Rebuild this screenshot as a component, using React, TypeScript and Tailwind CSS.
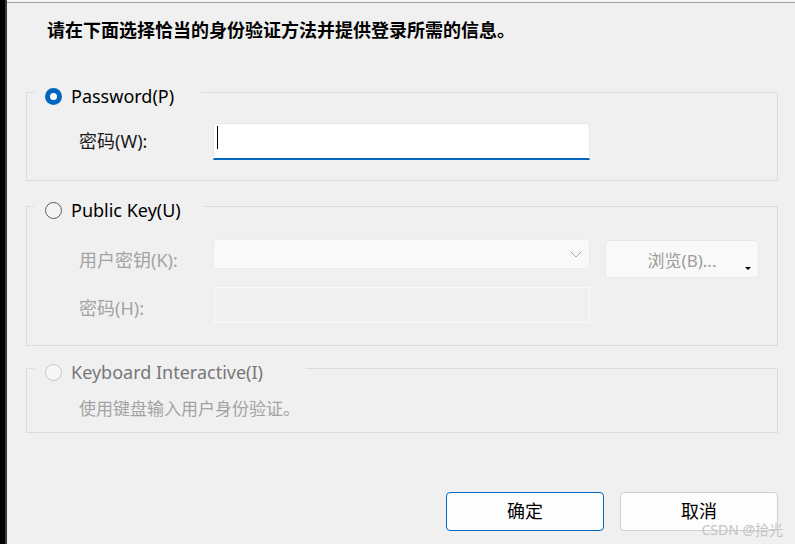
import React from 'react';

type RadioState = 'checked' | 'unchecked' | 'disabled';

const Radio: React.FC<{ state: RadioState }> = ({ state }) => {
  if (state === 'checked') {
    return (
      <span className="w-[17px] h-[17px] rounded-full bg-[#0067c0] flex items-center justify-center shrink-0">
        <span className="w-[7px] h-[7px] rounded-full bg-white" />
      </span>
    );
  }
  if (state === 'disabled') {
    return <span className="w-[17px] h-[17px] rounded-full border border-[#c4c4c4] bg-[#f7f7f7] shrink-0" />;
  }
  return <span className="w-[17px] h-[17px] rounded-full border border-[#5c5c5c] bg-[#f4f4f4] shrink-0" />;
};

// legend is 34px tall with the content pushed 4px below the border line
const GroupLegend: React.FC<{ width: string; state: RadioState; label: string }> = ({ width, state, label }) => (
  <legend className={`ml-[7px] pl-[11px] ${width}`}>
    <span className="flex items-center gap-[9px] h-[34px] pt-[8px]">
      <Radio state={state} />
      <span className={`text-[18px] leading-[26px] ${state === 'disabled' ? 'text-[#777777]' : 'text-black'}`}>
        {label}
      </span>
    </span>
  </legend>
);

export default function App() {
  return (
    <div className="relative w-[795px] h-[544px] flex overflow-hidden bg-[#f0f0f0] font-['Noto_Sans','Noto_Sans_CJK_SC',sans-serif]">
      <div className="w-[5px] bg-black" />
      <div className="w-[2px] bg-[#3a3a3a]" />
      <div className="flex-1 flex flex-col">
        <div className="h-[2px] bg-[#f8f8f8]" />
        <div className="h-px bg-[#a0a0a0]" />

        <h1 className="pl-[40px] pt-[15px] text-[18px] leading-[24px] font-bold text-black">
          请在下面选择恰当的身份验证方法并提供登录所需的信息。
        </h1>

        <div className="pl-[19px] flex flex-col">
          {/* Password */}
          <fieldset className="w-[752px] mt-[33px] border border-[#dcdcdc] pb-[20px]">
            <GroupLegend width="w-[167px]" state="checked" label="Password(P)" />
            <div className="flex items-center ml-[52px] mt-[14px]">
              <span className="w-[134px] text-[18px] text-[#1a1a1a]">密码(W):</span>
              <div className="relative w-[377px] h-[37px] bg-white border border-[#e6e6e6] border-b-2 border-b-[#0067c0] rounded-t-[3px]">
                <span className="absolute left-[3px] top-[2px] w-px h-[23px] bg-black" />
              </div>
            </div>
          </fieldset>

          {/* Public key */}
          <fieldset className="w-[752px] mt-[8px] border border-[#dcdcdc] pb-[22px]">
            <GroupLegend width="w-[170px]" state="unchecked" label="Public Key(U)" />
            <div className="flex items-center ml-[52px] mt-[16px]">
              <span className="w-[134px] pt-[3px] text-[18px] text-[#a3a3a3]">用户密钥(K):</span>
              <div className="self-start w-[377px] h-[30px] bg-[#f9f9f9] border border-[#ececec] rounded-[4px] flex items-center justify-end pr-[7px]">
                <svg width="12" height="7" viewBox="0 0 12 7" fill="none" stroke="#a8a8a8" strokeWidth="1">
                  <path d="M0.5 0.5 L6 6 L11.5 0.5" />
                </svg>
              </div>
              <button
                type="button"
                className="relative self-start mt-[1px] ml-[15px] w-[154px] h-[38px] pt-[3px] bg-[#f9f9f9] border border-[#e8e8e8] rounded-[4px] text-[17px] text-[#9c9c9c]"
              >
                浏览(B)...
                <span className="absolute right-[7px] bottom-[7px] w-0 h-0 border-l-[3px] border-r-[3px] border-t-[3px] border-l-transparent border-r-transparent border-t-black" />
              </button>
            </div>
            <div className="flex items-center ml-[52px] mt-[9px]">
              <span className="w-[135px] pt-[7px] text-[18px] text-[#a3a3a3]">密码(H):</span>
              <div className="w-[376px] h-[36px] border border-[#fbfbfb] bg-[#f0f0f0]" />
            </div>
          </fieldset>

          {/* Keyboard interactive */}
          <fieldset className="w-[752px] mt-[5px] border border-[#dcdcdc] pb-[11px]">
            <GroupLegend width="w-[272px]" state="disabled" label="Keyboard Interactive(I)" />
            <p className="ml-[52px] mt-[12px] text-[17px] leading-[24px] text-[#a3a3a3]">
              使用键盘输入用户身份验证。
            </p>
          </fieldset>

          <div className="w-[752px] mt-[59px] flex justify-end gap-[16px]">
            <button
              type="button"
              className="w-[158px] h-[39px] bg-[#fdfdfd] border border-[#0067c0] rounded-[4px] text-[18px] text-black"
            >
              确定
            </button>
            <button
              type="button"
              className="w-[158px] h-[39px] bg-[#fdfdfd] border border-[#d0d0d0] rounded-[4px] text-[18px] text-black"
            >
              取消
            </button>
          </div>
        </div>
      </div>

      <span className="absolute right-[12px] bottom-[5px] text-[14px] leading-[18px] text-[#c4c4c4]">CSDN @拾光</span>
    </div>
  );
}
